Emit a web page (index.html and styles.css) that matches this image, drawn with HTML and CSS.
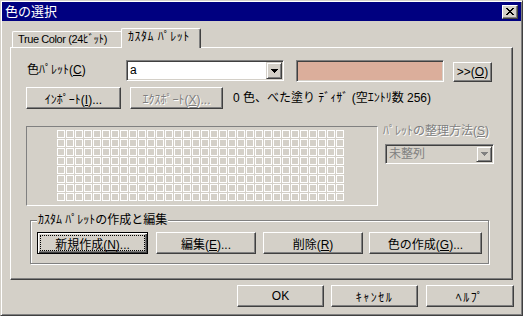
FILE: index.html
```html
<html>
<head>
	<title>色の選択</title>
<link rel="stylesheet" href="styles.css">
</head>
<body>
	<div class="window">
		<div class="titlebar">
			<span class="title">色の選択</span>
			<button class="close"><svg width="8" height="7" viewBox="0 0 8 7"><path d="M0 0h2v1H0z M6 0h2v1H6z M1 1h2v1H1z M5 1h2v1H5z M2 2h4v1H2z M3 3h2v1H3z M2 4h4v1H2z M1 5h2v1H1z M5 5h2v1H5z M0 6h2v1H0z M6 6h2v1H6z" fill="#000"/></svg></button>
		</div>

		<div class="tabs">
			<div class="tab">True Color (24ﾋﾞｯﾄ)</div>
			<div class="tab active">ｶｽﾀﾑ ﾊﾟﾚｯﾄ</div>
		</div>

		<div class="panel">
			<div class="row row-palette">
				<span class="lbl-main">色ﾊﾟﾚｯﾄ(<u>C</u>)</span>
				<div class="combo">
					<span class="value">a</span>
					<span class="drop"><svg width="7" height="4" viewBox="0 0 7 4"><path d="M0 0h7v1H0z M1 1h5v1H1z M2 2h3v1H2z M3 3h1v1H3z" fill="#000"/></svg></span>
				</div>
				<div class="swatch"></div>
				<button class="btn btn-more">&gt;&gt;(<u>O</u>)</button>
			</div>

			<div class="row row-io">
				<button class="btn btn-import">ｲﾝﾎﾟｰﾄ(<u>I</u>)...</button>
				<button class="btn btn-export off">ｴｸｽﾎﾟｰﾄ(<u>X</u>)...</button>
				<span class="info">0 色、べた塗り ﾃﾞｨｻﾞ (空ｴﾝﾄﾘ数 256)</span>
			</div>

			<div class="row row-grid">
				<div class="palette-box"><div class="cells"></div></div>
				<div class="sort">
					<div class="sort-lbl">ﾊﾟﾚｯﾄの整理方法(<u>S</u>)</div>
					<div class="combo combo-off">
						<span class="value">未整列</span>
						<span class="drop"><svg width="7" height="4" viewBox="0 0 7 4"><path d="M0 0h7v1H0z M1 1h5v1H1z M2 2h3v1H2z M3 3h1v1H3z" fill="#808080"/></svg></span>
					</div>
				</div>
			</div>

			<fieldset class="group">
				<legend>ｶｽﾀﾑ ﾊﾟﾚｯﾄの作成と編集</legend>
				<button class="btn default btn-new">新規作成(<u>N</u>)...</button>
				<button class="btn btn-edit">編集(<u>E</u>)...</button>
				<button class="btn btn-del">削除(<u>R</u>)</button>
				<button class="btn btn-make">色の作成(<u>G</u>)...</button>
			</fieldset>
		</div>

		<div class="actions">
			<button class="btn btn-ok">OK</button>
			<button class="btn btn-cancel">ｷｬﾝｾﾙ</button>
			<button class="btn btn-help">ﾍﾙﾌﾟ</button>
		</div>
	</div>
</body>
</html>
```

FILE: styles.css
```css
* {
	box-sizing: border-box;
}

body {
	margin: 0;
	background-color: #d4d0c8;
	font-family: "Liberation Sans", "Noto Sans CJK JP", sans-serif;
	font-size: 12px;
	line-height: 14px;
	color: #000;
}

.window {
	width: 523px;
	height: 316px;
	padding: 1px;
	border: 1px solid;
	border-color: #d4d0c8 #404040 #404040 #d4d0c8;
	box-shadow: inset 1px 1px #fff, inset -1px -1px #808080;
}

/* title bar */
.titlebar {
	height: 19px;
	background-color: #000080;
	color: white;
	display: flex;
	justify-content: space-between;
	align-items: flex-start;
	padding: 0 3px;
}

.title {
	align-self: center;
	font-size: 13px;
}

.close {
	width: 16px;
	height: 14px;
	margin-top: 3px;
	padding: 2px 0 0 3px;
	background-color: #d4d0c8;
	border: 1px solid;
	border-color: #fff #404040 #404040 #fff;
	box-shadow: inset -1px -1px #808080;
	display: flex;
	align-items: flex-start;
}

.close svg {
	display: block;
}

/* tabs */
.tabs {
	display: flex;
	align-items: flex-end;
	margin: 7px 8px 0;
	padding-left: 2px;
}

.tab {
	height: 16px;
	width: 109px;
	padding: 0 0 0 5px;
	border-top: 1px solid #fff;
	border-left: 1px solid #fff;
	border-top-left-radius: 2px;
	font-size: 11px;
	letter-spacing: -0.4px;
	white-space: nowrap;
}

.tab.active {
	height: 20px;
	width: 80px;
	margin-bottom: -1px;
	padding: 1px 0 0 6px;
	background-color: #d4d0c8;
	border-right: 1px solid #404040;
	border-top-right-radius: 2px;
	box-shadow: inset -1px 0 #808080;
	font-size: 12px;
	letter-spacing: 0.5px;
	position: relative;
	z-index: 1;
}

.panel {
	height: 233px;
	margin: 0 8px;
	border: 1px solid;
	border-color: #fff #404040 #404040 #fff;
	box-shadow: inset -1px -1px #808080;
}

.row {
	display: flex;
	align-items: flex-start;
}

/* first row */
.row-palette {
	margin: 12px 0 0 16px;
}

.lbl-main {
	width: 99px;
	line-height: 21px;
	white-space: nowrap;
}

.combo {
	display: flex;
	width: 158px;
	height: 21px;
	padding: 1px;
	background-color: white;
	border: 1px solid;
	border-color: #808080 #fff #fff #808080;
	box-shadow: inset 1px 1px #404040, inset -1px -1px #d4d0c8;
}

.combo .value {
	flex: 1;
	padding-left: 2px;
	line-height: 17px;
}

.drop {
	width: 16px;
	height: 17px;
	background-color: #d4d0c8;
	border: 1px solid;
	border-color: #d4d0c8 #404040 #404040 #d4d0c8;
	box-shadow: inset 1px 1px #fff, inset -1px -1px #808080;
	display: flex;
	align-items: center;
	justify-content: center;
}

.drop svg {
	display: block;
}

.swatch {
	width: 148px;
	height: 22px;
	margin-left: 12px;
	background-color: #dbae9b;
	border: 1px solid;
	border-color: #808080 #fff #fff #808080;
	box-shadow: inset 1px 1px #404040, inset -1px -1px #d4d0c8;
}

/* buttons */
.btn {
	font-family: inherit;
	font-size: 12px;
	color: #000;
	background-color: #d4d0c8;
	height: 22px;
	padding: 0;
	border: 1px solid;
	border-color: #fff #404040 #404040 #fff;
	box-shadow: inset -1px -1px #808080;
	white-space: nowrap;
	outline: none;
}

.btn.off {
	color: #808080;
	text-shadow: 1px 1px #fff;
}

.btn.default {
	border-color: #000;
	box-shadow: inset 1px 1px #fff, inset -1px -1px #404040, inset -2px -2px #808080;
	position: relative;
}

.btn.default::after {
	content: "";
	position: absolute;
	top: 2px;
	left: 2px;
	right: 2px;
	bottom: 2px;
	border: 1px dotted #000;
}

.btn-more {
	width: 39px;
	height: 20px;
	margin: 2px 0 0 9px;
}

/* second row */
.row-io {
	margin: 5px 0 0 15px;
}

.btn-import {
	width: 95px;
}

.btn-export {
	width: 93px;
	margin-left: 9px;
}

.info {
	margin-left: 10px;
	line-height: 22px;
	white-space: nowrap;
}

/* palette grid */
.row-grid {
	margin: 17px 0 0 15px;
}

.palette-box {
	width: 352px;
	height: 80px;
	padding: 3px 0 0 30px;
	border: 1px solid;
	border-color: #808080 #fff #fff #808080;
}

.cells {
	width: 287px;
	height: 71px;
	background-color: #d4d0c8;
	background-image:
		linear-gradient(to right, transparent 8px, #d4d0c8 8px),
		linear-gradient(to bottom, transparent 8px, #d4d0c8 8px),
		linear-gradient(to right, #fff 1px, transparent 1px, transparent 7px, #fff 7px),
		linear-gradient(to bottom, #fff 1px, transparent 1px, transparent 7px, #fff 7px);
	background-size: 9px 9px;
}

.sort {
	margin-left: 5px;
}

.sort-lbl {
	margin-top: -2px;
	color: #808080;
	text-shadow: 1px 1px #fff;
	white-space: nowrap;
}

.combo-off {
	width: 109px;
	height: 20px;
	margin: 6px 0 0 2px;
	background-color: #d4d0c8;
	color: #808080;
}

.combo-off .value {
	line-height: 16px;
}

.combo-off .drop {
	height: 16px;
}

/* group box */
.group {
	display: flex;
	width: 459px;
	min-width: 0;
	margin: 8px 0 0 19px;
	padding: 6px 6px 9px 6px;
	border: 1px solid #808080;
	box-shadow: inset 1px 1px #fff, 1px 1px #fff;
}

.group legend {
	padding: 0 1px;
	line-height: 12px;
	background-color: #d4d0c8;
}

.btn-new {
	width: 111px;
}

.btn-edit {
	width: 100px;
	margin-left: 8px;
}

.btn-del {
	width: 100px;
	margin-left: 7px;
}

.btn-make {
	width: 113px;
	margin-left: 6px;
}

/* dialog buttons */
.actions {
	display: flex;
	justify-content: flex-end;
	margin-top: 5px;
	padding-right: 7px;
}

.btn-ok {
	width: 87px;
}

.btn-cancel {
	width: 87px;
	margin-left: 7px;
	letter-spacing: 1.5px;
}

.btn-help {
	width: 88px;
	margin-left: 8px;
	letter-spacing: 1.5px;
}
```
